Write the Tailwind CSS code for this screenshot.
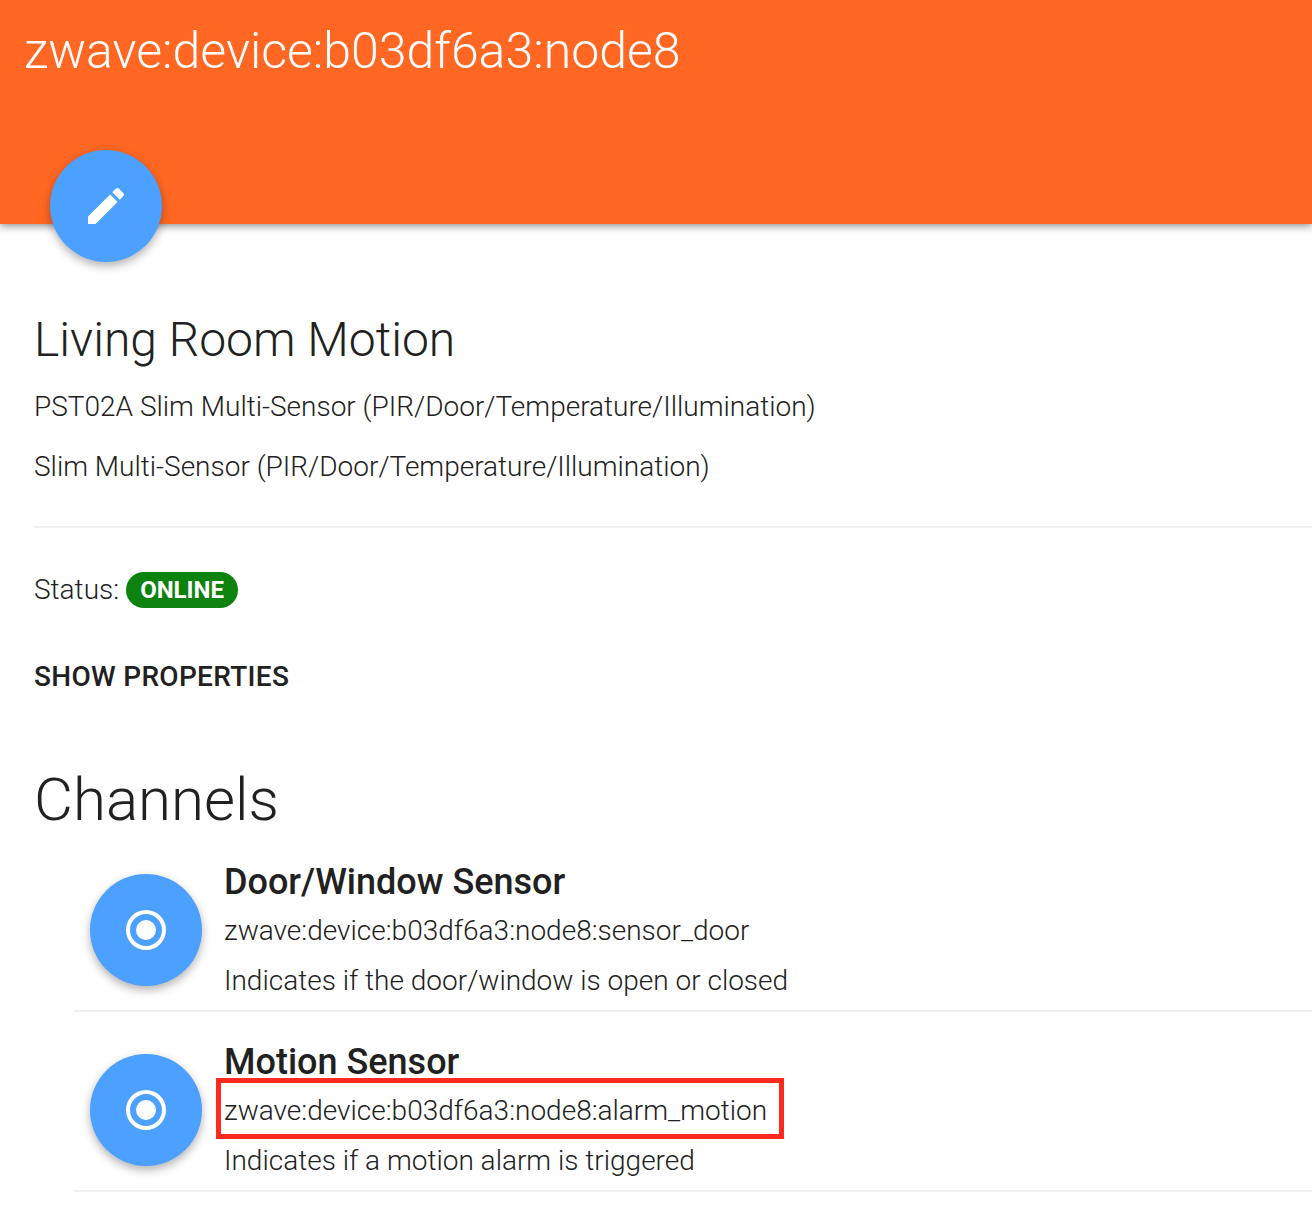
<!DOCTYPE html>
<html lang="en">
<head>
    <meta charset="UTF-8">
    <script src="https://cdn.jsdelivr.net/npm/@tailwindcss/browser@4"></script>
    <title>Thing details</title>
</head>
<body class="bg-white font-['Roboto',sans-serif] text-[#212121] overflow-hidden h-[1214px]">
    <!-- Header -->
    <header class="relative h-[224px] bg-[#ff6723] shadow-[0_2px_8px_rgba(0,0,0,0.45)]">
        <h1 class="pl-[24px] pt-[21px] text-[50px] leading-[60px] font-light text-white">zwave:device:b03df6a3:node8</h1>
        <button class="absolute left-[50px] top-[150px] w-[112px] h-[112px] rounded-full bg-[#4ca0ff] shadow-[0_4px_10px_rgba(0,0,0,0.3)] flex items-center justify-center">
            <svg class="w-[48px] h-[48px]" viewBox="0 0 24 24" fill="white"><path d="M3 17.25V21h3.75L17.81 9.94l-3.75-3.75L3 17.25zM20.71 7.04a1 1 0 0 0 0-1.41l-2.34-2.34a1 1 0 0 0-1.41 0l-1.83 1.83 3.75 3.75 1.83-1.83z"/></svg>
        </button>
    </header>

    <main class="pl-[34px]">
        <h2 class="mt-[86px] text-[48px] leading-[60px] font-light">Living Room Motion</h2>
        <p class="mt-[19px] text-[28px] leading-[36px] font-light">PST02A Slim Multi-Sensor (PIR/Door/Temperature/Illumination)</p>
        <p class="mt-[24px] text-[28px] leading-[36px] font-light">Slim Multi-Sensor (PIR/Door/Temperature/Illumination)</p>
        <hr class="mt-[41px] border-t-2 border-[#eeeeee]">
        <div class="mt-[44px] flex items-center gap-[7px] h-[36px]">
            <span class="text-[28px] font-light">Status:</span>
            <span class="w-[112px] h-[36px] rounded-full bg-[#0e820e] text-white text-[24px] font-bold flex items-center justify-center">ONLINE</span>
        </div>
        <p class="mt-[51px] text-[28px] leading-[36px] font-medium tracking-[0.3px]">SHOW PROPERTIES</p>
        <h2 class="mt-[76px] text-[60px] leading-[58px] font-light">Channels</h2>

        <ul class="ml-[40px] mt-[3px]">
            <li class="h-[180px] border-b-2 border-[#eeeeee] flex">
                <div class="ml-[16px] mt-[42px] w-[112px] h-[112px] rounded-full bg-[#4ca0ff] shadow-[0_4px_10px_rgba(0,0,0,0.3)] flex items-center justify-center shrink-0">
                    <svg class="w-[48px] h-[48px]" viewBox="0 0 24 24" fill="white"><path d="M12 7a5 5 0 1 0 0 10 5 5 0 0 0 0-10zm0-5a10 10 0 1 0 0 20 10 10 0 0 0 0-20zm0 18a8 8 0 1 1 0-16 8 8 0 0 1 0 16z"/></svg>
                </div>
                <div class="ml-[22px]">
                    <p class="mt-[30px] text-[36px] leading-[40px] font-medium">Door/Window Sensor</p>
                    <p class="mt-[11px] text-[28px] leading-[36px] font-light">zwave:device:b03df6a3:node8:sensor_door</p>
                    <p class="mt-[14px] text-[28px] leading-[36px] font-light">Indicates if the door/window is open or closed</p>
                </div>
            </li>
            <li class="h-[180px] border-b-2 border-[#eeeeee] flex">
                <div class="ml-[16px] mt-[42px] w-[112px] h-[112px] rounded-full bg-[#4ca0ff] shadow-[0_4px_10px_rgba(0,0,0,0.3)] flex items-center justify-center shrink-0">
                    <svg class="w-[48px] h-[48px]" viewBox="0 0 24 24" fill="white"><path d="M12 7a5 5 0 1 0 0 10 5 5 0 0 0 0-10zm0-5a10 10 0 1 0 0 20 10 10 0 0 0 0-20zm0 18a8 8 0 1 1 0-16 8 8 0 0 1 0 16z"/></svg>
                </div>
                <div class="ml-[22px] relative">
                    <p class="mt-[30px] text-[36px] leading-[40px] font-medium">Motion Sensor</p>
                    <p class="mt-[11px] text-[28px] leading-[36px] font-light">zwave:device:b03df6a3:node8:alarm_motion</p>
                    <p class="mt-[14px] text-[28px] leading-[36px] font-light">Indicates if a motion alarm is triggered</p>
                    <div class="absolute left-[-8px] top-[66px] w-[568px] h-[61px] border-[5px] border-[#ff2a1f]"></div>
                </div>
            </li>
        </ul>
    </main>
</body>
</html>
